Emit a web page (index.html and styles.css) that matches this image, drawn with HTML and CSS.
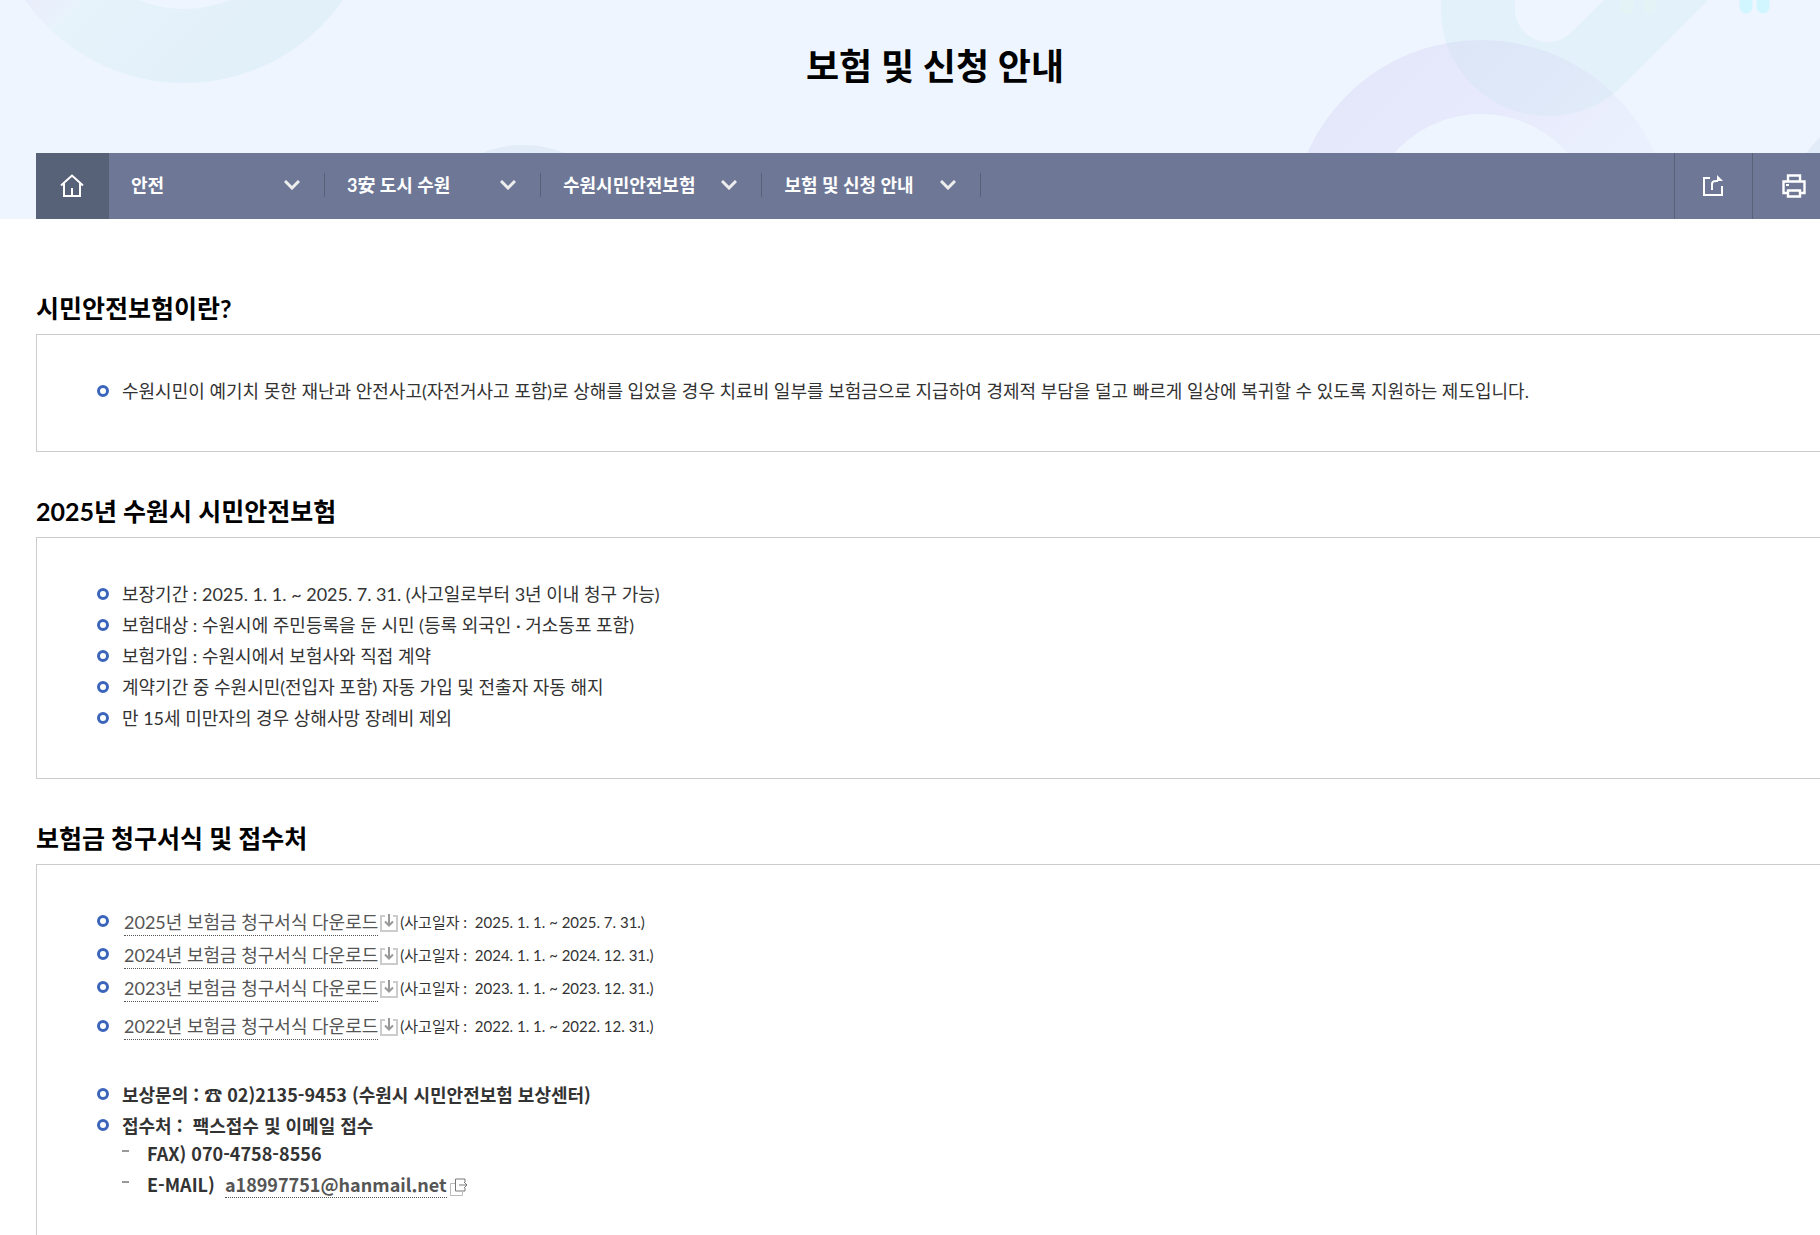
FILE: index.html
```
<!DOCTYPE html>
<html lang="ko">
<head>
    <meta charset="UTF-8">
    <meta name="viewport" content="width=device-width, initial-scale=1.0">
    <title>보험 및 신청 안내</title>
    <link rel="stylesheet" href="styles.css">
</head>
<body>
<div class="wrap">
    <!-- Page header -->
    <header class="visual">
        <svg class="visual-bg" width="1870" height="219" viewBox="0 0 1870 219" aria-hidden="true">
            <defs>
                <linearGradient id="ringLeft" x1="0" y1="0" x2="1" y2="1">
                    <stop offset="0.4" stop-color="#ecebfb"/>
                    <stop offset="0.52" stop-color="#e7f3fb"/>
                    <stop offset="0.8" stop-color="#e2f0f9"/>
                </linearGradient>
                <linearGradient id="ringRight" x1="0" y1="0" x2="1" y2="1">
                    <stop offset="0.1" stop-color="#c9bfec" stop-opacity="0.25"/>
                    <stop offset="0.4" stop-color="#d3c8f2" stop-opacity="0.22"/>
                    <stop offset="0.6" stop-color="#d8d4f2" stop-opacity="0.15"/>
                </linearGradient>
            </defs>
            <circle cx="184" cy="-111" r="157" fill="none" stroke="url(#ringLeft)" stroke-width="74"/>
            <circle cx="523" cy="259" r="114" fill="#e1ecf8"/>
            <circle cx="1898" cy="219" r="113" fill="#e1ecf8"/>
            <path d="M1478 -20V8a70 70 0 0 0 120 50L1681 -25" fill="none" stroke="#e3f2fa" stroke-width="74"/>
            <circle cx="1481" cy="230" r="153" fill="none" stroke="url(#ringRight)" stroke-width="74"/>
            <path d="M1627 0v8M1650 0v8" stroke="#e4f3f6" stroke-width="13" stroke-linecap="round"/>
            <path d="M1746 -4v11M1763 -4v11" stroke="#d1f6ff" stroke-width="13" stroke-linecap="round"/>
        </svg>
        <h1 class="page-title">보험 및 신청 안내</h1>
        <nav class="location">
            <a class="home" href="#" aria-label="홈">
                <svg width="24" height="24" viewBox="0 0 24 24"><path d="M1 11.500 12 1.500l11 10M4 9.500V22h16V9.500M12 22v-8" fill="none" stroke="#fff" stroke-width="2"/></svg>
            </a>
            <button class="depth wide" type="button">안전<svg width="16" height="10" viewBox="0 0 16 10"><path d="M1 1l7 7 7-7"/></svg></button>
            <button class="depth wide" type="button">3安 도시 수원<svg width="16" height="10" viewBox="0 0 16 10"><path d="M1 1l7 7 7-7"/></svg></button>
            <button class="depth" type="button">수원시민안전보험<svg width="16" height="10" viewBox="0 0 16 10"><path d="M1 1l7 7 7-7"/></svg></button>
            <button class="depth" type="button">보험 및 신청 안내<svg width="16" height="10" viewBox="0 0 16 10"><path d="M1 1l7 7 7-7"/></svg></button>
            <div class="tools">
                <button class="share" type="button" aria-label="공유">
                    <svg width="22" height="22" viewBox="0 0 22 22"><path d="M8 3H2v17h18v-9M10 15V9q0-3 4-3h2" fill="none" stroke="#fff" stroke-width="2"/><path d="M15 0l6 6h-6z" fill="#fff"/></svg>
                </button>
                <button class="print" type="button" aria-label="인쇄">
                    <svg width="24" height="24" viewBox="0 0 24 24"><path d="M6 7V1.500h12V7M6 19H1.500V7.500h21V19H18M6 16.500h12v6H6z" fill="none" stroke="#fff" stroke-width="2.400"/><path d="M4 10h3v2H4z" fill="#fff"/></svg>
                </button>
            </div>
        </nav>
    </header>

    <!-- Contents -->
    <main class="contents">
        <h2>시민안전보험이란?</h2>
        <div class="box">
            <ul class="list">
                <li>수원시민이 예기치 못한 재난과 안전사고(자전거사고 포함)로 상해를 입었을 경우 치료비 일부를 보험금으로 지급하여 경제적 부담을 덜고 빠르게 일상에 복귀할 수 있도록 지원하는 제도입니다.</li>
            </ul>
        </div>

        <h2>2025년 수원시 시민안전보험</h2>
        <div class="box">
            <ul class="list">
                <li>보장기간 : 2025. 1. 1. ~ 2025. 7. 31. (사고일로부터 3년 이내 청구 가능)</li>
                <li>보험대상 : 수원시에 주민등록을 둔 시민 (등록 외국인 · 거소동포 포함)</li>
                <li>보험가입 : 수원시에서 보험사와 직접 계약</li>
                <li>계약기간 중 수원시민(전입자 포함) 자동 가입 및 전출자 자동 해지</li>
                <li>만 15세 미만자의 경우 상해사망 장례비 제외</li>
            </ul>
        </div>

        <h2>보험금 청구서식 및 접수처</h2>
        <div class="box">
            <ul class="list files">
                <li><a class="link" href="#">2025년 보험금 청구서식 다운로드</a><svg class="down" width="18" height="18" viewBox="0 0 18 18"><path d="M5 2H1v15h16V2h-4" stroke="#ccc"/><path d="M9 0v11M5 7.500l4 4 4-4" stroke="#999"/></svg><small>(사고일자 :&nbsp; 2025. 1. 1. ~ 2025. 7. 31.)</small></li>
                <li><a class="link" href="#">2024년 보험금 청구서식 다운로드</a><svg class="down" width="18" height="18" viewBox="0 0 18 18"><path d="M5 2H1v15h16V2h-4" stroke="#ccc"/><path d="M9 0v11M5 7.500l4 4 4-4" stroke="#999"/></svg><small>(사고일자 :&nbsp; 2024. 1. 1. ~ 2024. 12. 31.)</small></li>
                <li><a class="link" href="#">2023년 보험금 청구서식 다운로드</a><svg class="down" width="18" height="18" viewBox="0 0 18 18"><path d="M5 2H1v15h16V2h-4" stroke="#ccc"/><path d="M9 0v11M5 7.500l4 4 4-4" stroke="#999"/></svg><small>(사고일자 :&nbsp; 2023. 1. 1. ~ 2023. 12. 31.)</small></li>
                <li class="last"><a class="link" href="#">2022년 보험금 청구서식 다운로드</a><svg class="down" width="18" height="18" viewBox="0 0 18 18"><path d="M5 2H1v15h16V2h-4" stroke="#ccc"/><path d="M9 0v11M5 7.500l4 4 4-4" stroke="#999"/></svg><small>(사고일자 :&nbsp; 2022. 1. 1. ~ 2022. 12. 31.)</small></li>
            </ul>
            <ul class="list contact">
                <li>보상문의 : ☎ 02)2135-9453 (수원시 시민안전보험 보상센터)</li>
                <li>접수처 :&nbsp; 팩스접수 및 이메일 접수
                    <ul class="sub">
                        <li>FAX) 070-4758-8556</li>
                        <li>E-MAIL)&nbsp; <a class="link" href="#">a18997751@hanmail.net</a><svg class="out" width="18" height="18" viewBox="0 0 18 18"><path d="M5 5.500H.5v12h12V14" stroke="#bbb"/><path d="M15 4V1H5.500v12H15v-3M9 7h8M14 4l3 3-3 3" stroke="#777"/></svg></li>
                    </ul>
                </li>
            </ul>
        </div>
    </main>
</div>
</body>
</html>
```
FILE: styles.css
```
*,
*::before,
*::after {
    box-sizing: border-box;
}

body {
    margin: 0;
    font-family: Lato, "Noto Sans CJK KR", sans-serif;
    font-size: 18px;
    line-height: 31px;
    color: #333;
    background: #fff;
    overflow-x: hidden;
}

ul {
    list-style: none;
    margin: 0;
    padding: 0;
}

button {
    font: inherit;
    color: inherit;
    background: none;
    border: 0;
    padding: 0;
    cursor: pointer;
}

/* the layout runs past the right edge of the window */
.wrap {
    margin-right: -50px;
}

/* Header */
.visual {
    position: relative;
    padding: 0 36px;
    background: #eef5ff;
    overflow: hidden;
}

.visual-bg {
    position: absolute;
    top: 0;
    left: 0;
}

.page-title {
    position: relative;
    margin: 0;
    padding: 36px 0 57px;
    font-size: 36px;
    line-height: 60px;
    font-weight: bold;
    color: #000;
    text-align: center;
}

.location {
    position: relative;
    display: flex;
    height: 66px;
    background: #6e7896;
    color: #fff;
}

.home {
    display: flex;
    align-items: center;
    justify-content: center;
    width: 73px;
    padding-right: 2px;
    background: #576178;
}

.depth {
    position: relative;
    display: flex;
    align-items: center;
    justify-content: space-between;
    gap: 26px;
    padding: 0 25px 2px 22px;
    font-weight: bold;
}

.depth.wide {
    width: 216px;
}

.depth svg {
    fill: none;
    stroke: #eee;
    stroke-width: 3;
}

.depth::after {
    content: "";
    position: absolute;
    top: 20px;
    right: 0;
    width: 1px;
    height: 24px;
    background: #576178;
}

.tools {
    display: flex;
    margin-left: auto;
}

.tools button {
    display: flex;
    align-items: center;
    justify-content: center;
    border-left: 1px solid #576178;
}

.share {
    width: 78px;
    padding-right: 2px;
}

.print {
    width: 82px;
}

/* Contents */
.contents {
    padding: 72px 36px 0;
}

h2 {
    margin: 0;
    padding-bottom: 8px;
    font-size: 25px;
    line-height: 35px;
    font-weight: bold;
    color: #000;
}

.box {
    margin-bottom: 42px;
    padding: 41px 60px 44px;
    border: 1px solid #ccc;
}

.list > li {
    position: relative;
    padding-left: 25px;
}

.list > li::before {
    content: "";
    position: absolute;
    top: 9px;
    left: 0;
    width: 12px;
    height: 12px;
    border: 3px solid #3b64bb;
    border-radius: 50%;
}

.link {
    color: #555;
    text-decoration: none;
    border-bottom: 1px dotted #555;
}

/* Download list */
.files > li {
    display: flex;
    align-items: center;
    gap: 2px;
    height: 33px;
    padding-left: 27px;
}

.files .link {
    line-height: 26px;
}

.files > .last {
    height: 43px;
}

.files > .last::before {
    top: 15px;
}

.files small {
    font-size: 15px;
}

.down,
.out {
    fill: none;
}

.down {
    stroke-width: 2;
}

/* Contact list */
.contact {
    padding-top: 31px;
    font-family: "Noto Sans CJK KR", sans-serif;
    font-weight: bold;
}

.sub {
    margin-top: -3px;
}

.sub > li {
    position: relative;
    padding-left: 25px;
}

.sub > li::before {
    content: "";
    position: absolute;
    top: 12px;
    left: 0;
    width: 7px;
    height: 2px;
    background: #999;
}

.out {
    margin-left: 3px;
    vertical-align: -4px;
}
```
